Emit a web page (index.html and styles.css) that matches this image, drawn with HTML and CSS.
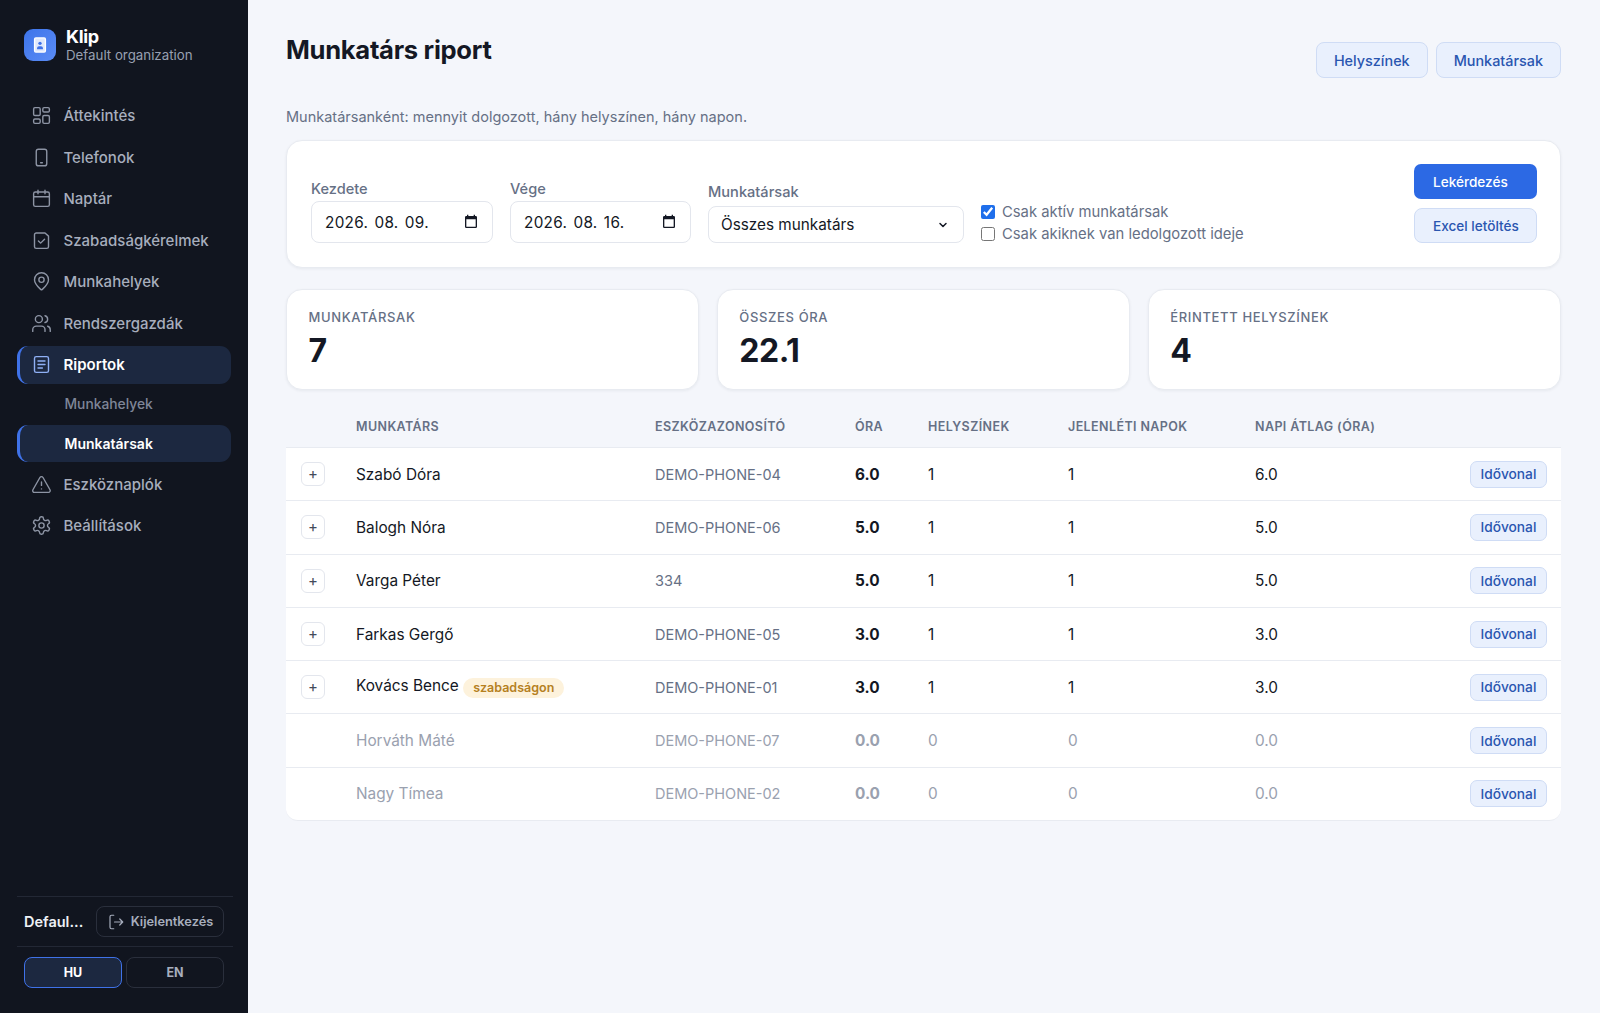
FILE: index.html
```html
<!DOCTYPE html>
<html lang="hu">
<head>
<meta charset="utf-8">
<title>Munkatárs riport</title>
<link rel="stylesheet" href="styles.css">
</head>
<body>
<aside class="sidebar">
  <div class="brand">
    <div class="logo">
      <svg viewBox="0 0 24 24" width="20" height="20"><rect x="5.500" y="3.500" width="13" height="17" rx="1.500" fill="#dfe8fc" stroke="#fff" stroke-width="1.600"/><circle cx="12" cy="10" r="2" fill="#3f72e8"/><path d="M8.500 17v-1.200c0-1.300 1-2.300 2.300-2.300h2.400c1.300 0 2.300 1 2.300 2.300V17z" fill="#3f72e8"/></svg>
    </div>
    <div class="brand-text">
      <div class="brand-name">Klip</div>
      <div class="brand-org">Default organization</div>
    </div>
  </div>
  <nav class="nav">
    <a class="nav-item"><svg class="ico" viewBox="0 0 24 24"><rect x="3" y="3" width="7.500" height="9" rx="1.500"/><rect x="13.500" y="3" width="7.500" height="5" rx="1.500"/><rect x="13.500" y="12" width="7.500" height="9" rx="1.500"/><rect x="3" y="16" width="7.500" height="5" rx="1.500"/></svg>Áttekintés</a>
    <a class="nav-item"><svg class="ico" viewBox="0 0 24 24"><rect x="6" y="2.500" width="12" height="19" rx="2.500"/><path d="M11 18h2"/></svg>Telefonok</a>
    <a class="nav-item"><svg class="ico" viewBox="0 0 24 24"><rect x="3" y="4.500" width="18" height="16.500" rx="2"/><path d="M8 2.500v4M16 2.500v4M3 10h18"/></svg>Naptár</a>
    <a class="nav-item"><svg class="ico" viewBox="0 0 24 24"><path d="M6 3.500h10l4 3.500v12a2 2 0 0 1-2 2H6a2 2 0 0 1-2-2v-13.500a2 2 0 0 1 2-2z"/><path d="M8.500 12.500l2.500 2.500 4.500-4.500"/></svg>Szabadságkérelmek</a>
    <a class="nav-item"><svg class="ico" viewBox="0 0 24 24"><path d="M20 10c0 5-5.500 9.500-7.400 11.300a1 1 0 0 1-1.200 0C9.500 19.500 4 15 4 10a8 8 0 0 1 16 0z"/><circle cx="12" cy="10" r="3"/></svg>Munkahelyek</a>
    <a class="nav-item"><svg class="ico" viewBox="0 0 24 24"><path d="M16 21v-2a4 4 0 0 0-4-4H6a4 4 0 0 0-4 4v2"/><circle cx="9" cy="7" r="4"/><path d="M22 21v-2a4 4 0 0 0-3-3.870M16 3.130a4 4 0 0 1 0 7.750"/></svg>Rendszergazdák</a>
    <a class="nav-item is-active"><svg class="ico ico-active" viewBox="0 0 24 24"><rect x="4" y="3" width="16" height="18" rx="2"/><path d="M8 8h8M8 12h8M8 16h5"/></svg>Riportok</a>
    <a class="nav-sub">Munkahelyek</a>
    <a class="nav-sub is-active">Munkatársak</a>
    <a class="nav-item after-sub"><svg class="ico" viewBox="0 0 24 24"><path d="M21.700 18l-8-14a2 2 0 0 0-3.500 0l-8 14A2 2 0 0 0 4 21h16a2 2 0 0 0 1.700-3z"/><path d="M12 9v4M12 17h.01"/></svg>Eszköznaplók</a>
    <a class="nav-item"><svg class="ico" viewBox="0 0 24 24"><path d="M12.220 2h-.440a2 2 0 0 0-2 2v.180a2 2 0 0 1-1 1.730l-.430.250a2 2 0 0 1-2 0l-.150-.080a2 2 0 0 0-2.730.730l-.220.380a2 2 0 0 0 .730 2.730l.150.100a2 2 0 0 1 1 1.720v.510a2 2 0 0 1-1 1.740l-.150.090a2 2 0 0 0-.730 2.730l.220.380a2 2 0 0 0 2.730.730l.150-.080a2 2 0 0 1 2 0l.430.250a2 2 0 0 1 1 1.730V20a2 2 0 0 0 2 2h.440a2 2 0 0 0 2-2v-.180a2 2 0 0 1 1-1.730l.430-.250a2 2 0 0 1 2 0l.150.080a2 2 0 0 0 2.730-.730l.220-.390a2 2 0 0 0-.730-2.730l-.150-.080a2 2 0 0 1-1-1.740v-.500a2 2 0 0 1 1-1.740l.150-.090a2 2 0 0 0 .730-2.730l-.220-.380a2 2 0 0 0-2.730-.730l-.150.080a2 2 0 0 1-2 0l-.430-.250a2 2 0 0 1-1-1.730V4a2 2 0 0 0-2-2z"/><circle cx="12" cy="12" r="3"/></svg>Beállítások</a>
  </nav>
  <div class="side-foot">
    <div class="user-row">
      <span class="user-name">Defaul...</span>
      <button class="logout"><svg class="ico-sm" viewBox="0 0 24 24"><path d="M9 3H6a2 2 0 0 0-2 2v14a2 2 0 0 0 2 2h3M10 12h11M17 8l4 4-4 4"/></svg>Kijelentkezés</button>
    </div>
    <div class="lang-row">
      <button class="lang is-on">HU</button>
      <button class="lang">EN</button>
    </div>
  </div>
</aside>
<main class="main">
  <header class="page-head">
    <h1 class="title">Munkatárs riport</h1>
    <div class="head-actions">
      <button class="btn-soft btn-head">Helyszínek</button>
      <button class="btn-soft btn-head">Munkatársak</button>
    </div>
  </header>
  <p class="lead">Munkatársanként: mennyit dolgozott, hány helyszínen, hány napon.</p>
  <section class="card filters">
    <div class="field field-date">
      <label class="lbl">Kezdete</label>
      <div class="date-box"><span>2026. 08. 09.</span><svg class="cal" viewBox="0 0 24 24"><path d="M19 3h-1V1h-2v2H8V1H6v2H5a2 2 0 0 0-2 2v14a2 2 0 0 0 2 2h14a2 2 0 0 0 2-2V5a2 2 0 0 0-2-2zm0 16H5V8h14z"/></svg></div>
    </div>
    <div class="field field-date">
      <label class="lbl">Vége</label>
      <div class="date-box"><span>2026. 08. 16.</span><svg class="cal" viewBox="0 0 24 24"><path d="M19 3h-1V1h-2v2H8V1H6v2H5a2 2 0 0 0-2 2v14a2 2 0 0 0 2 2h14a2 2 0 0 0 2-2V5a2 2 0 0 0-2-2zm0 16H5V8h14z"/></svg></div>
    </div>
    <div class="field field-select">
      <label class="lbl">Munkatársak</label>
      <div class="select-box"><span>Összes munkatárs</span><svg class="chev" viewBox="0 0 12 12"><path d="M3 4.500L6 7.500L9 4.500"/></svg></div>
    </div>
    <div class="checks">
      <label class="chk"><input type="checkbox" checked>Csak aktív munkatársak</label>
      <label class="chk"><input type="checkbox">Csak akiknek van ledolgozott ideje</label>
    </div>
    <div class="filter-actions">
      <button class="btn-primary">Lekérdezés</button>
      <button class="btn-soft btn-excel">Excel letöltés</button>
    </div>
  </section>
  <section class="stats">
    <div class="card stat"><div class="stat-label">Munkatársak</div><div class="stat-value">7</div></div>
    <div class="card stat"><div class="stat-label">Összes óra</div><div class="stat-value">22.1</div></div>
    <div class="card stat"><div class="stat-label">Érintett helyszínek</div><div class="stat-value">4</div></div>
  </section>
  <table class="report">
    <colgroup><col class="c1"><col class="c2"><col class="c3"><col class="c4"><col class="c5"><col class="c6"><col class="c7"></colgroup>
    <thead>
      <tr><th></th><th>Munkatárs</th><th>Eszközazonosító</th><th>Óra</th><th>Helyszínek</th><th>Jelenléti napok</th><th>Napi átlag (óra)</th></tr>
    </thead>
    <tbody>
      <tr><td><button class="plus">+</button></td><td>Szabó Dóra</td><td class="dev">DEMO-PHONE-04</td><td class="hrs">6.0</td><td>1</td><td>1</td><td><div class="act"><span>6.0</span><button class="tl">Idővonal</button></div></td></tr>
      <tr><td><button class="plus">+</button></td><td>Balogh Nóra</td><td class="dev">DEMO-PHONE-06</td><td class="hrs">5.0</td><td>1</td><td>1</td><td><div class="act"><span>5.0</span><button class="tl">Idővonal</button></div></td></tr>
      <tr><td><button class="plus">+</button></td><td>Varga Péter</td><td class="dev">334</td><td class="hrs">5.0</td><td>1</td><td>1</td><td><div class="act"><span>5.0</span><button class="tl">Idővonal</button></div></td></tr>
      <tr><td><button class="plus">+</button></td><td>Farkas Gergő</td><td class="dev">DEMO-PHONE-05</td><td class="hrs">3.0</td><td>1</td><td>1</td><td><div class="act"><span>3.0</span><button class="tl">Idővonal</button></div></td></tr>
      <tr><td><button class="plus">+</button></td><td>Kovács Bence <span class="badge">szabadságon</span></td><td class="dev">DEMO-PHONE-01</td><td class="hrs">3.0</td><td>1</td><td>1</td><td><div class="act"><span>3.0</span><button class="tl">Idővonal</button></div></td></tr>
      <tr class="muted"><td></td><td>Horváth Máté</td><td class="dev">DEMO-PHONE-07</td><td class="hrs">0.0</td><td>0</td><td>0</td><td><div class="act"><span>0.0</span><button class="tl">Idővonal</button></div></td></tr>
      <tr class="muted"><td></td><td>Nagy Tímea</td><td class="dev">DEMO-PHONE-02</td><td class="hrs">0.0</td><td>0</td><td>0</td><td><div class="act"><span>0.0</span><button class="tl">Idővonal</button></div></td></tr>
    </tbody>
  </table>
</main>
</body>
</html>
```
FILE: styles.css
```css
* { box-sizing: border-box; }
html, body { margin: 0; height: 100%; }
body {
  display: flex;
  min-height: 1013px;
  background: #f4f6fb;
  color: #141824;
  font-family: Inter, "Liberation Sans", sans-serif;
  font-size: 15px;
  overflow: hidden;
}
button { font-family: inherit; cursor: pointer; }

/* Sidebar */
.sidebar {
  width: 248px;
  flex: none;
  height: 1013px;
  background: #11151f;
  display: flex;
  flex-direction: column;
  padding: 26px 17px 25px 17px;
}
.brand { display: flex; align-items: center; gap: 10px; padding-left: 7px; margin-bottom: 32.500px; }
.logo {
  width: 32px; height: 32px; border-radius: 9px;
  background: linear-gradient(135deg, #3d74ea, #5b8cf5);
  display: flex; align-items: center; justify-content: center;
}
.brand-name { color: #fff; font-size: 18px; font-weight: 700; line-height: 21px; letter-spacing: -0.3px; }
.brand-org { color: #98a0b1; font-size: 13.300px; line-height: 17px; }
.nav { display: flex; flex-direction: column; gap: 3.500px; }
.nav-item {
  height: 38px;
  display: flex; align-items: center;
  gap: 11.500px;
  padding-left: 14px;
  color: #a7aebd;
  font-size: 15px;
  font-weight: 500;
  border-radius: 11px;
}
.after-sub { margin-top: -0.5px; }
.ico { width: 21px; height: 21px; flex: none; fill: none; stroke: #8d94a4; stroke-width: 1.600; stroke-linecap: round; stroke-linejoin: round; }
.ico-active { stroke: #8fb0f5; }
.nav-item.is-active, .nav-sub.is-active {
  background: #1c2840;
  border-left: 3px solid #3f72e8;
  color: #fff;
  font-weight: 600;
}
.nav-item.is-active { padding-left: 11px; }
.nav-sub {
  height: 37px;
  display: flex; align-items: center;
  margin-top: -1.750px;
  padding-left: 47.500px;
  color: #7f8698;
  font-size: 13.800px;
  font-weight: 500;
  border-radius: 11px;
}
.nav-sub.is-active { margin-top: -0.750px; padding-left: 44.500px; font-size: 14px; color: #fff; font-weight: 600; }
.side-foot { margin-top: auto; margin-right: -2px; }
.user-row {
  border-top: 1px solid #232835;
  border-bottom: 1px solid #232835;
  padding: 9px 9px 9px 7px;
  display: flex; align-items: center; justify-content: space-between;
}
.user-name { color: #eef1f6; font-size: 14.500px; font-weight: 600; }
.logout {
  width: 128px; height: 31px;
  display: flex; align-items: center; justify-content: center; gap: 6px;
  background: transparent;
  border: 1px solid #2a2f3c;
  border-radius: 8px;
  color: #a7aebd;
  font-size: 12.800px;
  font-weight: 600;
}
.ico-sm { width: 18px; height: 18px; fill: none; stroke: #a7aebd; stroke-width: 1.600; stroke-linecap: round; stroke-linejoin: round; }
.lang-row { display: flex; gap: 4px; padding: 10px 9px 0 7px; }
.lang {
  flex: 1; height: 31px;
  background: transparent;
  border: 1px solid #2a2f3c;
  border-radius: 8px;
  color: #a7aebd;
  font-size: 12.500px;
  font-weight: 700;
}
.lang.is-on { background: #1c2840; border-color: #3f72e8; color: #fff; }

/* Main */
.main { flex: 1; min-width: 0; padding: 0 39px 0 38px; }
.page-head { display: flex; justify-content: space-between; align-items: flex-start; height: 105.500px; }
.title { margin: 33px 0 0; font-size: 25.600px; line-height: 34px; font-weight: 700; letter-spacing: -0.3px; color: #141824; }
.head-actions { display: flex; gap: 8px; margin-top: 42px; }
.btn-soft {
  background: #e9f0fd;
  border: 1px solid #cfdcf5;
  color: #2a56b0;
  border-radius: 8px;
  font-weight: 500;
}
.btn-head { height: 36px; padding: 0 17px; font-size: 14.400px; }
.lead { margin: 0 0 12.500px; color: #667085; font-size: 14.500px; line-height: 22px; }
.card {
  background: #fff;
  border: 1px solid #e8ebf1;
  border-radius: 16px;
  box-shadow: 0 1px 3px rgba(20, 30, 50, 0.06);
}
.filters {
  height: 128px;
  padding: 23px 23px 24px 24px;
  display: flex;
  align-items: flex-end;
}
.field { display: flex; flex-direction: column; gap: 3px; }
.field-date { margin-right: 17px; }
.lbl { color: #667085; font-size: 14.600px; font-weight: 500; line-height: 17px; }
.date-box {
  width: 182px; height: 42px;
  border: 1px solid #e3e6ed; border-radius: 8px;
  display: flex; align-items: center; justify-content: space-between;
  padding: 0 13px 0 13px;
  background: #fff;
  font-size: 15.300px;
  letter-spacing: 0.3px;
  word-spacing: 1.700px;
}
.field-date + .field-date .date-box { width: 181px; }
.cal { width: 16px; height: 16px; fill: #141824; }
.field-select { margin-right: 17px; gap: 5px; }
.select-box {
  width: 256px; height: 37px;
  border: 1px solid #e3e6ed; border-radius: 8px;
  display: flex; align-items: center; justify-content: space-between;
  padding: 0 14px 0 12px;
  font-size: 15.300px;
}
.chev { width: 12px; height: 12px; fill: none; stroke: #141824; stroke-width: 1.500; stroke-linecap: round; stroke-linejoin: round; }
.checks { display: flex; flex-direction: column; gap: 4px; }
.chk { display: flex; align-items: center; gap: 7px; color: #667085; font-size: 14.800px; line-height: 18px; }
.chk input { width: 14px; height: 14px; margin: 0; accent-color: #1f6feb; }
.filter-actions { margin-left: auto; display: flex; flex-direction: column; gap: 9px; width: 123px; }
.btn-primary {
  height: 35px; width: 123px; text-align: left; padding-left: 19px;
  background: #2c69e4; border: 0; border-radius: 7px;
  color: #fff; font-size: 13.600px; font-weight: 500;
}
.btn-excel { height: 35px; width: 123px; text-align: left; padding-left: 18px; font-size: 13.600px; }
.stats { display: grid; grid-template-columns: repeat(3, 1fr); gap: 17.500px; margin-top: 21px; }
.stat { height: 101px; padding: 19px 21.500px; }
.stat-label { color: #667085; font-size: 13px; font-weight: 500; letter-spacing: 0.65px; text-transform: uppercase; line-height: 17px; }
.stat-value { font-size: 32px; font-weight: 700; line-height: 40px; margin-top: 5px; letter-spacing: -0.5px; color: #141824; }

/* Table */
.report { width: 1275px; margin-top: 11px; border-collapse: separate; border-spacing: 0; table-layout: fixed; }
.c1 { width: 55px; } .c2 { width: 299px; } .c3 { width: 200px; } .c4 { width: 73px; }
.c5 { width: 140px; } .c6 { width: 187px; } .c7 { width: 321px; }
.report th {
  height: 47px; padding: 4px 15px 0; text-align: left;
  color: #667085; font-size: 12.500px; font-weight: 600; letter-spacing: 0.4px; text-transform: uppercase;
  border-bottom: 1px solid #e8ebf1;
}
.report td {
  height: 53.300px; padding: 0 15px; background: #fff;
  border-bottom: 1px solid #e8ebf1;
  font-size: 15.360px;
}
.report td:first-child { padding-right: 0; }
.report td:last-child { padding-right: 14px; }
.report tbody tr:last-child td:first-child { border-bottom-left-radius: 12px; }
.report tbody tr:last-child td:last-child { border-bottom-right-radius: 12px; }
.report .dev { color: #667085; font-size: 14.500px; }
.hrs { font-weight: 700; }
.act { display: flex; align-items: center; justify-content: space-between; }
.tl {
  width: 77px; height: 27px;
  background: #e9f0fd; border: 1px solid #cfdcf5; border-radius: 7px;
  color: #2a56b0; font-size: 13.760px; font-weight: 500; padding: 0;
}
.plus {
  width: 24px; height: 24px; padding: 0;
  background: #fff; border: 1px solid #e3e6ed; border-radius: 6px;
  color: #444b5a; font-size: 15px; line-height: 20px;
}
.badge {
  display: inline-block; padding: 0 10px; height: 20px; line-height: 20px;
  background: #fdf2dc; color: #b5801f; border-radius: 10px;
  font-size: 12.500px; font-weight: 600; vertical-align: -1px;
}
.report .muted td, .report .muted .dev { color: #9aa1af; }
```
